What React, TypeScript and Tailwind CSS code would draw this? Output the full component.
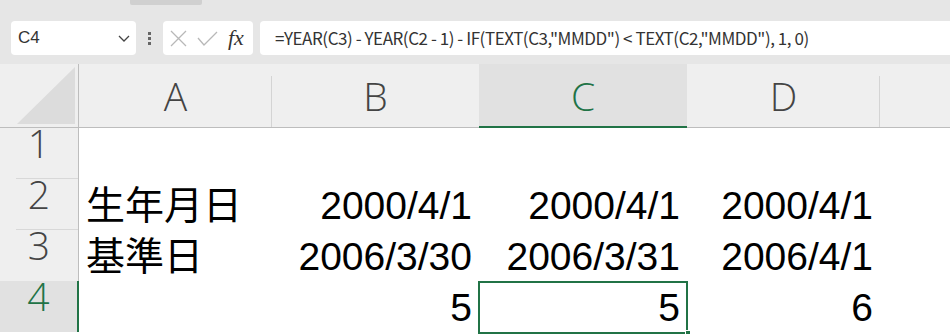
import React from "react";

const cols = ["A", "B", "C", "D", ""];

const rows: { n: number; cells: string[] }[] = [
  { n: 1, cells: ["", "", "", ""] },
  { n: 2, cells: ["生年月日", "2000/4/1", "2000/4/1", "2000/4/1"] },
  { n: 3, cells: ["基準日", "2006/3/30", "2006/3/31", "2006/4/1"] },
  { n: 4, cells: ["", "5", "5", "6"] },
];

const formula = `=YEAR(C3) - YEAR(C2 - 1) - IF(TEXT(C3,"MMDD") < TEXT(C2,"MMDD"), 1, 0)`;

function Toolbar() {
  return (
    <div className="relative flex h-[64px] items-start bg-[#e6e6e6] pt-[21px] pl-[11px]">
      <div className="absolute top-0 left-[130px] h-[5px] w-[72px] rounded-b-[2px] bg-[#d0d0d0]" />
      {/* Name box */}
      <div className="flex h-[34px] w-[125px] items-center justify-between rounded-[4px] bg-white pr-[5px] pl-[7px]">
        <span className="font-['Liberation_Sans',sans-serif] text-[17px] text-[#333]">C4</span>
        <svg width="14" height="10" viewBox="0 0 14 10" fill="none">
          <path d="M2 3l5 5 5-5" stroke="#444" strokeWidth="1.3" />
        </svg>
      </div>
      <div className="flex h-[34px] w-[27px] flex-col items-center justify-center gap-[2px]">
        <span className="h-[3px] w-[3px] bg-[#666]" />
        <span className="h-[3px] w-[3px] bg-[#666]" />
        <span className="h-[3px] w-[3px] bg-[#666]" />
      </div>
      {/* Cancel / enter / fx */}
      <div className="flex h-[34px] w-[90px] items-center rounded-[4px] bg-white pl-[7px]">
        <svg width="17" height="17" viewBox="0 0 17 17" fill="none">
          <path d="M1 1l15 15M16 1L1 16" stroke="#b8b8b8" strokeWidth="1.3" />
        </svg>
        <svg className="ml-[10px]" width="21" height="15" viewBox="0 0 21 15" fill="none">
          <path d="M1 7l6 7L20 1" stroke="#b8b8b8" strokeWidth="1.3" />
        </svg>
        <span className="ml-[10px] font-['Liberation_Serif',serif] text-[22px] italic leading-none text-[#333]">
          fx
        </span>
      </div>
      {/* Formula bar */}
      <div className="ml-[7px] flex h-[34px] flex-1 items-center rounded-l-[4px] bg-white pl-[15px]">
        <span className="font-['Noto_Sans_CJK_JP',sans-serif] text-[17px] tracking-[-0.45px] whitespace-nowrap text-[#333]">
          {formula}
        </span>
      </div>
    </div>
  );
}

export default function App() {
  const grid = "grid grid-cols-[79px_193px_207px_208px_193px_1fr]";
  const headerFont = "font-['Open_Sans',sans-serif] font-light text-[39px]";
  const cellFont = "font-['Liberation_Sans','Noto_Sans_CJK_JP',sans-serif] text-[39px] leading-[39px] text-black";

  return (
    <div className="h-[334px] w-[950px] overflow-hidden bg-white">
      <Toolbar />

      {/* Column headers */}
      <div className={`${grid} h-[64px] border-b border-[#bdbdbd] bg-[#efefef]`}>
        <div className="relative border-r border-[#bdbdbd]">
          <div className="absolute right-[3px] bottom-[3px] h-[57px] w-[58px] bg-[#dcdcdc] [clip-path:polygon(100%_0,100%_100%,0_100%)]" />
        </div>
        {cols.map((c, i) => {
          const sel = c === "C";
          return (
            <div
              key={i}
              className={`relative flex items-center justify-center leading-none ${headerFont} ${
                sel ? "bg-[#e1e1e1] text-[#217346]" : "text-[#444]"
              }`}
            >
              {c}
              {i < 4 && !sel && cols[i + 1] !== "C" && (
                <div className="absolute top-[12px] right-0 bottom-0 w-px bg-[#d4d4d4]" />
              )}
              {sel && <div className="absolute right-0 bottom-[-1px] left-0 h-[2px] bg-[#217346]" />}
            </div>
          );
        })}
      </div>

      {/* Rows */}
      {rows.map((r) => {
        const selRow = r.n === 4;
        return (
          <div key={r.n} className={`${grid} h-[51px]`}>
            <div
              className={`relative flex justify-center leading-[30px] ${headerFont} ${
                selRow
                  ? "border-r-2 border-[#217346] bg-[#e1e1e1] text-[#217346]"
                  : "border-r border-[#bdbdbd] bg-[#efefef] text-[#444]"
              }`}
            >
              {r.n}
              {r.n < 3 && <div className="absolute right-0 bottom-0 left-[16px] h-px bg-[#d8d8d8]" />}
            </div>
            {r.cells.map((v, ci) => {
              const sel = selRow && ci === 2;
              const left = ci === 0;
              return (
                <div
                  key={ci}
                  className={`relative flex items-end pb-[5px] ${cellFont} ${
                    left ? "justify-start pl-[7px]" : "justify-end pr-[7px]"
                  }`}
                >
                  {v}
                  {sel && (
                    <>
                      <div className="absolute top-0 right-[-1px] bottom-[-2px] left-[-1px] border-2 border-[#217346]" />
                      <div className="absolute right-[-4px] bottom-[-4px] h-[6px] w-[6px] border border-white bg-[#217346]" />
                    </>
                  )}
                </div>
              );
            })}
            <div />
          </div>
        );
      })}
    </div>
  );
}
